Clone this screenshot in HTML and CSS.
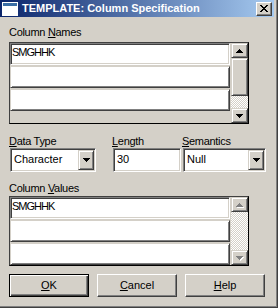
FILE: index.html
```html
<!DOCTYPE html>
<html lang="en">

<head>
    <meta charset="UTF-8">
    <meta name="viewport" content="width=device-width, initial-scale=1.0">
    <title>TEMPLATE: Column Specification</title>
    <link rel="stylesheet" href="styles.css">
</head>

<body>
    <div class="window">
        <div class="frame">
            <!-- caption bar -->
            <div class="titlebar">
                <svg class="app_icon" width="16" height="14" viewBox="0 0 16 14">
                    <rect x="0" y="0" width="16" height="14" fill="#ffffff" />
                    <rect x="1" y="1" width="14" height="3" fill="#3a6ea5" />
                    <rect x="1" y="4" width="14" height="9" fill="#ffffff" />
                </svg>
                <span class="caption">TEMPLATE: Column Specification</span>
                <div class="close_btn">
                    <svg width="8" height="7" viewBox="0 0 8 7" shape-rendering="crispEdges">
                        <rect x="0" y="0" width="2" height="1" /><rect x="6" y="0" width="2" height="1" />
                        <rect x="1" y="1" width="2" height="1" /><rect x="5" y="1" width="2" height="1" />
                        <rect x="2" y="2" width="4" height="1" />
                        <rect x="3" y="3" width="2" height="1" />
                        <rect x="2" y="4" width="4" height="1" />
                        <rect x="1" y="5" width="2" height="1" /><rect x="5" y="5" width="2" height="1" />
                        <rect x="0" y="6" width="2" height="1" /><rect x="6" y="6" width="2" height="1" />
                    </svg>
                </div>
            </div>

            <div class="client">
                <div class="label label_names">Column <u>N</u>ames</div>
                <div class="listbox listbox_names">
                    <div class="rows">
                        <div class="cell focused">SMGHHK</div>
                        <div class="cell"></div>
                        <div class="cell"></div>
                    </div>
                    <div class="scrollbar">
                        <div class="sb_btn sb_up">
                            <svg width="7" height="4" viewBox="0 0 7 4" shape-rendering="crispEdges">
                                <rect x="3" y="0" width="1" height="1" /><rect x="2" y="1" width="3" height="1" />
                                <rect x="1" y="2" width="5" height="1" /><rect x="0" y="3" width="7" height="1" />
                            </svg>
                        </div>
                        <div class="sb_thumb"></div>
                        <div class="sb_track"></div>
                        <div class="sb_btn sb_down">
                            <svg width="7" height="4" viewBox="0 0 7 4" shape-rendering="crispEdges">
                                <rect x="0" y="0" width="7" height="1" /><rect x="1" y="1" width="5" height="1" />
                                <rect x="2" y="2" width="3" height="1" /><rect x="3" y="3" width="1" height="1" />
                            </svg>
                        </div>
                    </div>
                </div>

                <div class="fields">
                    <div class="field_col col_type">
                        <div class="label"><u>D</u>ata Type</div>
                        <div class="combo combo_type">
                            <span class="combo_text">Character</span>
                            <div class="combo_btn">
                                <svg width="7" height="4" viewBox="0 0 7 4" shape-rendering="crispEdges">
                                    <rect x="0" y="0" width="7" height="1" /><rect x="1" y="1" width="5" height="1" />
                                    <rect x="2" y="2" width="3" height="1" /><rect x="3" y="3" width="1" height="1" />
                                </svg>
                            </div>
                        </div>
                    </div>
                    <div class="field_col col_length">
                        <div class="label"><u>L</u>ength</div>
                        <div class="edit">30</div>
                    </div>
                    <div class="field_col col_sem">
                        <div class="label"><u>S</u>emantics</div>
                        <div class="combo combo_sem">
                            <span class="combo_text">Null</span>
                            <div class="combo_btn">
                                <svg width="7" height="4" viewBox="0 0 7 4" shape-rendering="crispEdges">
                                    <rect x="0" y="0" width="7" height="1" /><rect x="1" y="1" width="5" height="1" />
                                    <rect x="2" y="2" width="3" height="1" /><rect x="3" y="3" width="1" height="1" />
                                </svg>
                            </div>
                        </div>
                    </div>
                </div>

                <div class="label label_values">Column <u>V</u>alues</div>
                <div class="listbox listbox_values">
                    <div class="rows">
                        <div class="cell focused">SMGHHK</div>
                        <div class="cell"></div>
                        <div class="cell"></div>
                    </div>
                    <div class="scrollbar">
                        <div class="sb_btn sb_up disabled">
                            <svg width="8" height="5" viewBox="0 0 8 5" shape-rendering="crispEdges">
                                <g fill="#ffffff" transform="translate(1,1)">
                                    <rect x="3" y="0" width="1" height="1" /><rect x="2" y="1" width="3" height="1" />
                                    <rect x="1" y="2" width="5" height="1" /><rect x="0" y="3" width="7" height="1" />
                                </g>
                                <g fill="#808080">
                                    <rect x="3" y="0" width="1" height="1" /><rect x="2" y="1" width="3" height="1" />
                                    <rect x="1" y="2" width="5" height="1" /><rect x="0" y="3" width="7" height="1" />
                                </g>
                            </svg>
                        </div>
                        <div class="sb_track sb_track_full"></div>
                        <div class="sb_btn sb_down disabled">
                            <svg width="8" height="5" viewBox="0 0 8 5" shape-rendering="crispEdges">
                                <g fill="#ffffff" transform="translate(1,1)">
                                    <rect x="0" y="0" width="7" height="1" /><rect x="1" y="1" width="5" height="1" />
                                    <rect x="2" y="2" width="3" height="1" /><rect x="3" y="3" width="1" height="1" />
                                </g>
                                <g fill="#808080">
                                    <rect x="0" y="0" width="7" height="1" /><rect x="1" y="1" width="5" height="1" />
                                    <rect x="2" y="2" width="3" height="1" /><rect x="3" y="3" width="1" height="1" />
                                </g>
                            </svg>
                        </div>
                    </div>
                </div>

                <div class="buttons">
                    <div class="btn btn_default"><u>O</u>K</div>
                    <div class="btn"><u>C</u>ancel</div>
                    <div class="btn"><u>H</u>elp</div>
                </div>
            </div>
        </div>
    </div>
</body>

</html>
```

FILE: styles.css
```css
body {
    margin: 0;
    font-family: "Liberation Sans", Arial, sans-serif;
    font-size: 11px;
    line-height: 13px;
    color: #000;
    background: #d4d0c8;
}

u {
    text-decoration: underline;
    text-underline-offset: 1px;
}

.window {
    width: 278px;
    height: 308px;
    box-sizing: border-box;
    background: #d4d0c8;
    border-right: 1px solid #404040;
    border-bottom: 1px solid #404040;
}

.frame {
    height: 100%;
    box-sizing: border-box;
    border-right: 1px solid #808080;
    border-bottom: 1px solid #808080;
    padding: 0 2px 2px 0;
}

/* caption */
.titlebar {
    display: flex;
    align-items: center;
    height: 17px;
    background: linear-gradient(to right, #0a246a, #a6caf0);
}

.app_icon {
    display: block;
    margin-left: 2px;
}

.caption {
    margin-left: 4px;
    color: #fff;
    font-weight: bold;
    white-space: nowrap;
}

.close_btn {
    display: flex;
    align-items: center;
    justify-content: center;
    width: 16px;
    height: 14px;
    box-sizing: border-box;
    margin-left: auto;
    margin-right: 2px;
    background: #d4d0c8;
    border: 1px solid;
    border-color: #fff #404040 #404040 #fff;
    box-shadow: inset -1px -1px #808080;
}

.close_btn svg {
    display: block;
}

/* dialog body */
.client {
    padding-left: 9px;
}

.label {
    letter-spacing: -0.3px;
    white-space: nowrap;
}

.label_names {
    padding-top: 9px;
}

.listbox {
    display: flex;
    width: 240px;
    box-sizing: border-box;
    border: 1px solid #000;
    border-left-color: #404040;
    border-top-color: #404040;
    background: #d4d0c8;
}

.listbox_names {
    height: 82px;
    margin-top: 3px;
}

.listbox_values {
    height: 70px;
    margin-top: 1px;
}

.rows {
    flex: 1;
    display: flex;
    flex-direction: column;
    gap: 1px;
}

.cell {
    height: 22px;
    box-sizing: border-box;
    background: #fff;
    border: 1px solid;
    border-color: #d4d0c8 #404040 #404040 #d4d0c8;
    box-shadow: inset 1px 1px #fff, inset -1px -1px #808080;
    padding: 2px 1px 0;
    letter-spacing: -1px;
}

.cell.focused {
    border-color: #808080 #fff #fff #808080;
    box-shadow: inset 1px 1px #404040, inset -1px -1px #d4d0c8;
}

.scrollbar {
    display: flex;
    flex-direction: column;
    width: 17px;
    margin-left: 1px;
}

.sb_btn {
    display: flex;
    align-items: center;
    justify-content: center;
    height: 15px;
    box-sizing: border-box;
    background: #d4d0c8;
    border: 1px solid;
    border-color: #d4d0c8 #404040 #404040 #d4d0c8;
    box-shadow: inset 1px 1px #fff, inset -1px -1px #808080;
}

.sb_btn svg {
    display: block;
}

.sb_btn.disabled svg {
    margin: 1px 0 0 1px;
}

.sb_thumb {
    height: 38px;
    box-sizing: border-box;
    background: #d4d0c8;
    border: 1px solid;
    border-color: #d4d0c8 #404040 #404040 #d4d0c8;
    box-shadow: inset 1px 1px #fff, inset -1px -1px #808080;
}

.sb_track {
    flex: 1;
    background: repeating-conic-gradient(#fff 0 25%, #d4d0c8 0 50%) 0 0 / 2px 2px;
}

/* type / length / semantics */
.fields {
    display: flex;
    margin-top: 11px;
}

.col_type {
    width: 103px;
}

.col_length {
    width: 70px;
}

.col_sem {
    width: 83px;
}

.combo,
.edit {
    height: 24px;
    box-sizing: border-box;
    margin-left: 1px;
    background: #fff;
    border: 1px solid;
    border-color: #808080 #fff #fff #808080;
    box-shadow: inset 1px 1px #404040, inset -1px -1px #d4d0c8;
}

.combo {
    display: flex;
    align-items: stretch;
    padding: 1px;
}

.combo_type {
    width: 86px;
}

.combo_sem {
    width: 83px;
}

.combo_text {
    flex: 1;
    padding: 3px 0 0 2px;
    white-space: nowrap;
}

.combo_btn {
    display: flex;
    align-items: center;
    justify-content: center;
    width: 16px;
    box-sizing: border-box;
    background: #d4d0c8;
    border: 1px solid;
    border-color: #d4d0c8 #404040 #404040 #d4d0c8;
    box-shadow: inset 1px 1px #fff, inset -1px -1px #808080;
}

.combo_btn svg {
    display: block;
}

.edit {
    width: 68px;
    padding: 4px 3px 0;
}

.label_values {
    margin-top: 10px;
}

/* push buttons */
.buttons {
    display: flex;
    gap: 8px;
    margin-top: 8px;
}

.btn {
    width: 80px;
    height: 23px;
    box-sizing: border-box;
    text-align: center;
    padding-top: 4px;
    background: #d4d0c8;
    border: 1px solid;
    border-color: #fff #404040 #404040 #fff;
    box-shadow: inset -1px -1px #808080;
}

.btn_default {
    border-color: #000;
    box-shadow: inset 1px 1px #fff, inset -1px -1px #404040, inset -2px -2px #808080;
}
```
